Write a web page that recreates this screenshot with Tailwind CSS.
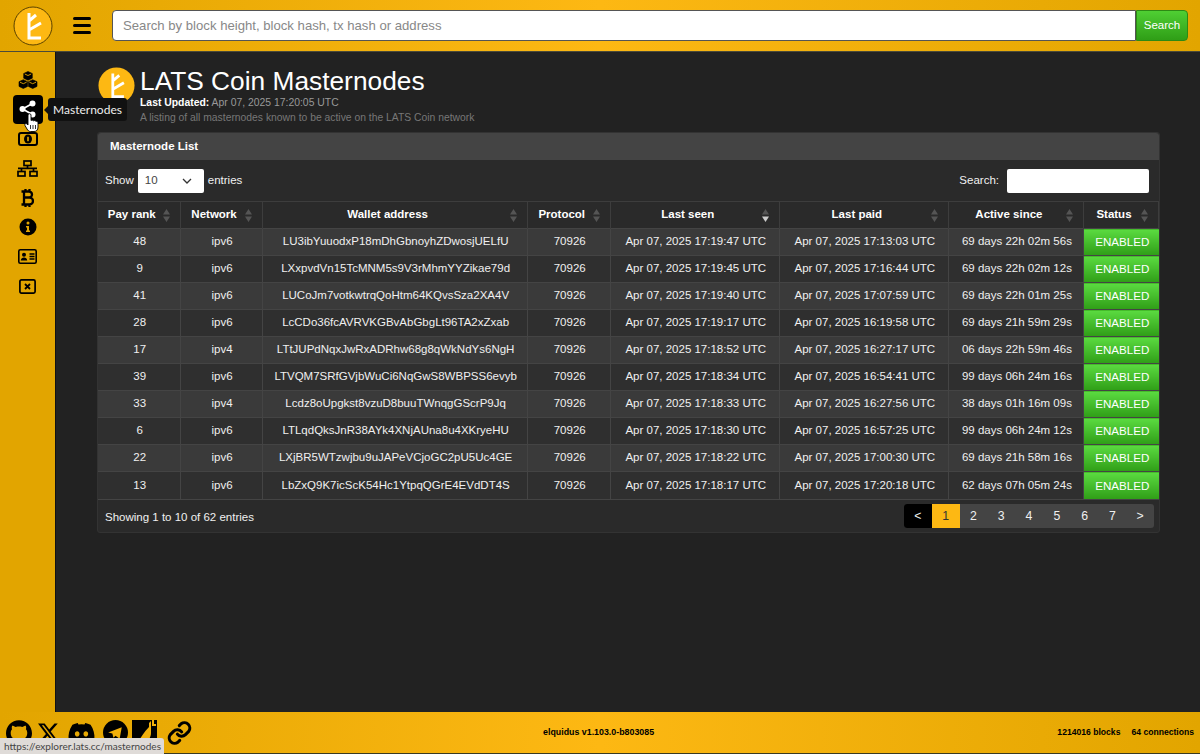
<!DOCTYPE html>
<html><head><meta charset="utf-8"><title>Masternodes</title>
<script src="https://cdn.jsdelivr.net/npm/@tailwindcss/browser@4"></script></head>
<body class="h-[754px] w-[1200px] overflow-hidden bg-[#222222] font-['Liberation_Sans',Arial,sans-serif] text-[11.5px] text-[#f0f0f0]">
<div class="relative flex h-[754px] flex-col">
<header class="flex h-[52px] shrink-0 items-center border-b border-[#4a4a3a] bg-gradient-to-r from-[#e2a500] via-[#fdb813] to-[#e2a500] pl-[13px] pr-[12px]">
  <svg width="40" height="40" viewBox="0 0 40 40" class="shrink-0"><circle cx="20" cy="20" r="19" fill="#fdb813" stroke="#5a4200" stroke-width="1"/><path d="M16 7V32H28M16 15L23 9M16 24L28 17" fill="none" stroke="#fff" stroke-width="3"/></svg>
  <div class="ml-[20px] flex w-[18px] shrink-0 flex-col gap-[4px]"><span class="h-[3px] rounded bg-black"></span><span class="h-[3px] rounded bg-black"></span><span class="h-[3px] rounded bg-black"></span></div>
  <div class="ml-[21px] flex h-[31px] flex-1">
    <div class="flex flex-1 items-center rounded-l border border-[#555] bg-white px-[10px] text-[13.15px] text-[#888]">Search by block height, block hash, tx hash or address</div>
    <div class="flex w-[52px] items-center justify-center rounded-r border border-[#2d8a14] bg-gradient-to-b from-[#4fcf33] to-[#2f9e16] text-[11.5px] text-white">Search</div>
  </div>
</header>
<div class="flex min-h-0 flex-1">
  <aside class="flex w-[56px] shrink-0 flex-col items-center border-r border-[#111] bg-[#e2a500] pt-[13px] text-black">
    <div class="flex h-[29.5px] w-[30px] items-center justify-center"><svg width="20" height="18" viewBox="0 0 20 18"><g fill="#000" stroke="#000" stroke-width=".6"><path d="M10 .5l4.300 2v4.700L10 9.300 5.700 7.200V2.500zM5.300 8.700l4.300 2v4.700l-4.300 2.100L1 15.400v-4.700zM14.700 8.700l4.300 2v4.700l-4.300 2.100-4.300-2.100v-4.700z"/></g><path d="M6.800 3l3.200 1.500L13.200 3M2 11.200l3.300 1.500 3.300-1.500M11.400 11.200l3.300 1.500 3.300-1.500" fill="none" stroke="#e2a500" stroke-width=".9"/></svg></div>
    <div class="flex h-[29.5px] w-[30px] items-center justify-center rounded bg-black"><svg width="17" height="18" viewBox="0 0 17 18" fill="#fff"><circle cx="13.500" cy="3.500" r="3"/><circle cx="3.500" cy="9" r="3"/><circle cx="13.500" cy="14.500" r="3"/><path d="M3.500 9L13.500 3.500M3.500 9l10 5.500" stroke="#fff" stroke-width="1.800"/></svg></div>
    <div class="flex h-[29.500px] w-[30px] items-center justify-center"><svg width="20" height="14" viewBox="0 0 20 14"><rect x="1" y="1" width="18" height="12" rx="2" fill="none" stroke="#000" stroke-width="2"/><ellipse cx="10" cy="7" rx="4" ry="4.500" fill="#000"/><rect x="9.200" y="4.800" width="1.600" height="4.400" fill="#e2a500"/></svg></div>
    <div class="flex h-[29.500px] w-[30px] items-center justify-center"><svg width="21" height="17" viewBox="0 0 21 17" fill="none" stroke="#000" stroke-width="1.700"><rect x="7" y="1" width="7" height="4.500"/><rect x="1" y="11.500" width="7" height="4.500"/><rect x="13" y="11.500" width="7" height="4.500"/><path d="M10.500 5.500v3.300M1 8.300h19M4.500 8.300v3M16.500 8.300v3"/></svg></div>
    <div class="flex h-[29.500px] w-[30px] items-center justify-center"><svg width="13" height="18" viewBox="0 0 13 18" fill="none" stroke="#000" stroke-width="2.300"><path d="M3 2.500v13M.5 2.500H8a3 3 0 010 6H3h5.500a3.500 3.500 0 010 7H.5M4.500 0v2.500M8.500 0v2.500M4.500 15.500V18M8.500 15.500V18"/></svg></div>
    <div class="flex h-[29.500px] w-[30px] items-center justify-center"><svg width="18" height="18" viewBox="0 0 18 18"><circle cx="9" cy="9" r="8.500" fill="#000"/><circle cx="9" cy="5" r="1.500" fill="#e2a500"/><path d="M7 8h3v4.500h1V14H7v-1.500h1V9.500H7z" fill="#e2a500"/></svg></div>
    <div class="flex h-[29.500px] w-[30px] items-center justify-center"><svg width="19" height="15" viewBox="0 0 19 15"><rect x=".8" y=".8" width="17.400" height="13.400" rx="1.500" fill="none" stroke="#000" stroke-width="1.600"/><circle cx="6" cy="5.700" r="2" fill="#000"/><path d="M2.800 11.500c0-4 6.400-4 6.400 0z" fill="#000"/><path d="M11.500 5h5M11.500 7.500h5M11.500 10h5" stroke="#000" stroke-width="1.400"/></svg></div>
    <div class="flex h-[29.500px] w-[30px] items-center justify-center"><svg width="17" height="15" viewBox="0 0 17 15" fill="none" stroke="#000"><rect x=".9" y=".9" width="15.200" height="13.200" rx="1.500" stroke-width="1.700"/><path d="M6 5l5 5M11 5l-5 5" stroke-width="1.800"/></svg></div>
  </aside>
  <main class="flex-1 pl-[41px] pr-[40px] pt-[14px]">
    <div class="flex h-[66px] items-start">
      <svg width="37" height="37" viewBox="0 0 40 40" class="ml-[1px] mt-[1px] shrink-0"><circle cx="20" cy="20" r="19.500" fill="#fdb813"/><path d="M16 7V32H28M16 15L23 9M16 24L28 17" fill="none" stroke="#fff" stroke-width="3"/></svg>
      <div class="ml-[5px]">
        <h1 class="text-[26.3px] leading-[30px] text-white">LATS Coin Masternodes</h1>
        <div class="text-[10.4px] leading-[13px] text-[#999]"><b class="text-white">Last Updated:</b> Apr 07, 2025 17:20:05 UTC</div>
        <div class="mt-[2px] text-[10.35px] leading-[13px] text-[#777]">A listing of all masternodes known to be active on the LATS Coin network</div>
      </div>
    </div>
    <section class="rounded-[3px] border border-[#333] bg-[#2a2a2a]">
      <div class="flex h-[27px] items-center rounded-t-[3px] bg-[#444] pl-[12px] text-[11.5px] font-bold text-white">Masternode List</div>
      <div class="flex h-[41px] items-center justify-between pl-[7px] pr-[10px] pt-[1px]">
        <div class="flex items-center gap-[4px]">Show <div class="flex h-[24px] w-[66px] items-center justify-between rounded-[2px] bg-white pl-[7px] pr-[12px] text-[#444]">10<svg width="10" height="6" viewBox="0 0 10 6" fill="none" stroke="#333" stroke-width="1.300"><path d="M1 1l4 4 4-4"/></svg></div> entries</div>
        <div class="flex items-center gap-[8px]">Search: <div class="h-[24px] w-[142px] rounded-[2px] bg-white"></div></div>
      </div>
      <table class="w-full table-fixed border-collapse border-t border-[#3d3d3d] text-center [&_td]:border-r [&_td]:border-[#444] [&_td]:pl-[2px] [&_th]:relative [&_th]:border-r [&_th]:border-[#3d3d3d] [&_th]:pl-[2px] [&_th]:pr-[16px] [&_th_svg]:absolute [&_th_svg]:right-[10px] [&_th_svg]:top-[7px] [&_tbody_tr]:h-[27px] [&_tbody_tr]:border-t [&_tbody_tr]:border-[#444] [&_tbody_tr:nth-child(odd)]:bg-[#3a3a3a] [&_tbody_tr:nth-child(even)]:bg-[#2f2f2f] [&_td:last-child]:border-r-0 [&_td:last-child]:bg-gradient-to-b [&_td:last-child]:from-[#5bdb40] [&_td:last-child]:to-[#2f9e16] [&_td:last-child]:text-[11.6px] [&_td:last-child]:text-white">
        <colgroup><col class="w-[82px]"><col class="w-[82px]"><col class="w-[265px]"><col class="w-[83px]"><col class="w-[169px]"><col class="w-[169px]"><col class="w-[135px]"><col class="w-[75px]"></colgroup>
        <thead><tr class="h-[27px] text-white">
          <th>Pay rank<svg width="7" height="13" viewBox="0 0 7 13" fill="#555"><path d="M3.500 0L7 5.500H0zM3.500 13L0 7.500h7z"/></svg></th>
          <th>Network<svg width="7" height="13" viewBox="0 0 7 13" fill="#555"><path d="M3.500 0L7 5.500H0zM3.500 13L0 7.500h7z"/></svg></th>
          <th>Wallet address<svg width="7" height="13" viewBox="0 0 7 13" fill="#555"><path d="M3.500 0L7 5.500H0zM3.500 13L0 7.500h7z"/></svg></th>
          <th>Protocol<svg width="7" height="13" viewBox="0 0 7 13" fill="#555"><path d="M3.500 0L7 5.500H0zM3.500 13L0 7.500h7z"/></svg></th>
          <th>Last seen<svg width="7" height="13" viewBox="0 0 7 13"><path d="M3.500 0L7 5.500H0z" fill="#555"/><path d="M3.500 13L0 7.500h7z" fill="#ccc"/></svg></th>
          <th>Last paid<svg width="7" height="13" viewBox="0 0 7 13" fill="#555"><path d="M3.500 0L7 5.500H0zM3.500 13L0 7.500h7z"/></svg></th>
          <th>Active since<svg width="7" height="13" viewBox="0 0 7 13" fill="#555"><path d="M3.500 0L7 5.500H0zM3.500 13L0 7.500h7z"/></svg></th>
          <th class="border-r-0">Status<svg width="7" height="13" viewBox="0 0 7 13" fill="#555"><path d="M3.500 0L7 5.500H0zM3.500 13L0 7.500h7z"/></svg></th>
        </tr></thead>
        <tbody>
          <tr><td>48</td><td>ipv6</td><td>LU3ibYuuodxP18mDhGbnoyhZDwosjUELfU</td><td>70926</td><td>Apr 07, 2025 17:19:47 UTC</td><td>Apr 07, 2025 17:13:03 UTC</td><td>69 days 22h 02m 56s</td><td>ENABLED</td></tr>
          <tr><td>9</td><td>ipv6</td><td>LXxpvdVn15TcMNM5s9V3rMhmYYZikae79d</td><td>70926</td><td>Apr 07, 2025 17:19:45 UTC</td><td>Apr 07, 2025 17:16:44 UTC</td><td>69 days 22h 02m 12s</td><td>ENABLED</td></tr>
          <tr><td>41</td><td>ipv6</td><td>LUCoJm7votkwtrqQoHtm64KQvsSza2XA4V</td><td>70926</td><td>Apr 07, 2025 17:19:40 UTC</td><td>Apr 07, 2025 17:07:59 UTC</td><td>69 days 22h 01m 25s</td><td>ENABLED</td></tr>
          <tr><td>28</td><td>ipv6</td><td>LcCDo36fcAVRVKGBvAbGbgLt96TA2xZxab</td><td>70926</td><td>Apr 07, 2025 17:19:17 UTC</td><td>Apr 07, 2025 16:19:58 UTC</td><td>69 days 21h 59m 29s</td><td>ENABLED</td></tr>
          <tr><td>17</td><td>ipv4</td><td>LTtJUPdNqxJwRxADRhw68g8qWkNdYs6NgH</td><td>70926</td><td>Apr 07, 2025 17:18:52 UTC</td><td>Apr 07, 2025 16:27:17 UTC</td><td>06 days 22h 59m 46s</td><td>ENABLED</td></tr>
          <tr><td>39</td><td>ipv6</td><td>LTVQM7SRfGVjbWuCi6NqGwS8WBPSS6evyb</td><td>70926</td><td>Apr 07, 2025 17:18:34 UTC</td><td>Apr 07, 2025 16:54:41 UTC</td><td>99 days 06h 24m 16s</td><td>ENABLED</td></tr>
          <tr><td>33</td><td>ipv4</td><td>Lcdz8oUpgkst8vzuD8buuTWnqgGScrP9Jq</td><td>70926</td><td>Apr 07, 2025 17:18:33 UTC</td><td>Apr 07, 2025 16:27:56 UTC</td><td>38 days 01h 16m 09s</td><td>ENABLED</td></tr>
          <tr><td>6</td><td>ipv6</td><td>LTLqdQksJnR38AYk4XNjAUna8u4XKryeHU</td><td>70926</td><td>Apr 07, 2025 17:18:30 UTC</td><td>Apr 07, 2025 16:57:25 UTC</td><td>99 days 06h 24m 12s</td><td>ENABLED</td></tr>
          <tr><td>22</td><td>ipv6</td><td>LXjBR5WTzwjbu9uJAPeVCjoGC2pU5Uc4GE</td><td>70926</td><td>Apr 07, 2025 17:18:22 UTC</td><td>Apr 07, 2025 17:00:30 UTC</td><td>69 days 21h 58m 16s</td><td>ENABLED</td></tr>
          <tr><td>13</td><td>ipv6</td><td>LbZxQ9K7icScK54Hc1YtpqQGrE4EVdDT4S</td><td>70926</td><td>Apr 07, 2025 17:18:17 UTC</td><td>Apr 07, 2025 17:20:18 UTC</td><td>62 days 07h 05m 24s</td><td>ENABLED</td></tr>
        </tbody>
      </table>
      <div class="flex h-[33px] items-center justify-between border-t border-[#444] pl-[7px] pr-[5px]">
        <span class="pt-[4px]">Showing 1 to 10 of 62 entries</span>
        <div class="flex h-[24px] w-[250px] overflow-hidden rounded-[3px] bg-[#444] text-center text-[12.25px] leading-[24px] [&>span]:flex-1">
          <span class="bg-black">&lt;</span><span class="bg-[#fdb813] text-[#333]">1</span><span>2</span><span>3</span><span>4</span><span>5</span><span>6</span><span>7</span><span>&gt;</span>
        </div>
      </div>
    </section>
  </main>
</div>
<footer class="flex h-[42px] shrink-0 items-center border-b border-[#3a3a20] bg-gradient-to-r from-[#e2a500] via-[#fdb813] to-[#e2a500] pr-[6px] text-[8.6px] text-black">
  <div class="flex w-[543px] items-center pl-[6px]">
    <svg width="26" height="26" viewBox="0 0 24 24"><path fill-rule="evenodd" d="M12 .297c-6.630 0-12 5.373-12 12 0 5.303 3.438 9.800 8.205 11.385.600.113.820-.258.820-.577 0-.285-.010-1.040-.015-2.040-3.338.724-4.042-1.610-4.042-1.610C4.422 18.070 3.633 17.700 3.633 17.700c-1.087-.744.084-.729.084-.729 1.205.084 1.838 1.236 1.838 1.236 1.070 1.835 2.809 1.305 3.495.998.108-.776.417-1.305.760-1.605-2.665-.300-5.466-1.332-5.466-5.930 0-1.310.465-2.380 1.235-3.220-.135-.303-.540-1.523.105-3.176 0 0 1.005-.322 3.300 1.230.960-.267 1.980-.399 3-.405 1.020.006 2.040.138 3 .405 2.280-1.552 3.285-1.230 3.285-1.230.645 1.653.240 2.873.120 3.176.765.840 1.230 1.910 1.230 3.220 0 4.610-2.805 5.625-5.475 5.920.420.360.810 1.096.810 2.220 0 1.606-.015 2.896-.015 3.286 0 .315.210.690.825.570C20.565 22.092 24 17.592 24 12.297c0-6.627-5.373-12-12-12"/></svg>
    <svg width="21" height="24" viewBox="0 0 24 24" class="ml-[6px]"><path d="M18.901 1.153h3.680l-8.040 9.190L24 22.846h-7.406l-5.800-7.584-6.638 7.584H.474l8.600-9.830L0 1.154h7.594l5.243 6.932ZM17.610 20.644h2.039L6.486 3.240H4.298Z"/></svg>
    <svg width="27" height="26" viewBox="0 0 24 24" class="ml-[9px]"><path d="M20.317 4.370a19.790 19.790 0 0 0-4.885-1.515.074.074 0 0 0-.079.037c-.210.375-.444.864-.608 1.250a18.270 18.270 0 0 0-5.487 0 12.640 12.640 0 0 0-.617-1.250.077.077 0 0 0-.079-.037A19.736 19.736 0 0 0 3.677 4.370a.070.070 0 0 0-.032.027C.533 9.046-.320 13.580.099 18.057a.082.082 0 0 0 .031.057 19.900 19.900 0 0 0 5.993 3.030.078.078 0 0 0 .084-.028c.462-.630.874-1.295 1.226-1.994a.076.076 0 0 0-.041-.106 13.107 13.107 0 0 1-1.872-.892.077.077 0 0 1-.008-.128c.126-.094.252-.192.372-.292a.074.074 0 0 1 .077-.010c3.928 1.793 8.180 1.793 12.062 0a.074.074 0 0 1 .078.010c.120.098.246.198.373.292a.077.077 0 0 1-.006.127 12.299 12.299 0 0 1-1.873.892.077.077 0 0 0-.041.107c.360.698.772 1.362 1.225 1.993a.076.076 0 0 0 .084.028 19.839 19.839 0 0 0 6.002-3.030.077.077 0 0 0 .032-.054c.500-5.177-.838-9.674-3.549-13.660a.061.061 0 0 0-.031-.030zM8.020 15.330c-1.183 0-2.157-1.085-2.157-2.419 0-1.333.956-2.419 2.157-2.419 1.210 0 2.176 1.096 2.157 2.420 0 1.333-.956 2.418-2.157 2.418zm7.975 0c-1.183 0-2.157-1.085-2.157-2.419 0-1.333.955-2.419 2.157-2.419 1.210 0 2.176 1.096 2.157 2.420 0 1.333-.946 2.418-2.157 2.418z"/></svg>
    <svg width="25" height="25" viewBox="0 0 24 24" class="ml-[8px]"><circle cx="12" cy="12" r="12"/><path d="M5 12l13-5-2 11-4-3-2 2-1-4z" fill="#f2b00a"/></svg>
    <svg width="25" height="25" viewBox="0 0 25 25" class="ml-[4px]"><rect width="25" height="25"/><path d="M19 1v12c0 5-3 8-7 8H7c2-4 5-9 10-14V3z" fill="#f2b00a"/><path d="M20 0h2v4h2v2h-4z" fill="#f2b00a"/></svg>
    <svg width="29" height="26" viewBox="0 0 24 24" fill="none" stroke="#000" stroke-width="2.800" stroke-linecap="round" stroke-linejoin="round" class="ml-[8px]"><path d="M10 13a5 5 0 0 0 7.500.500l3-3a5 5 0 0 0-7-7l-1.700 1.700"/><path d="M14 11a5 5 0 0 0-7.500-.500l-3 3a5 5 0 0 0 7 7l1.700-1.700"/></svg>
  </div>
  <div class="flex-1 pt-[1px] text-[8.86px] font-bold">elquidus v1.103.0-b803085</div>
  <div class="flex gap-[11px] font-bold"><span>1214016 blocks</span><span>64 connections</span></div>
</footer>
<div class="absolute left-[48px] top-[98px] flex h-[23px] w-[79px] items-center justify-center rounded-[3px] bg-[#111] font-['Lato',sans-serif] text-[12px] text-[#eee]">Masternodes<span class="absolute left-[-4px] top-[8px] h-0 w-0 border-y-[4px] border-r-[4px] border-y-transparent border-r-[#111]"></span></div>
<svg width="15" height="19" viewBox="0 0 15 19" class="absolute left-[24px] top-[113px]"><path d="M4 2c0-1.700 3-1.700 3 0v5.500c1-.600 2-.400 2.500.300 1-.500 2-.200 2.300.500 1-.300 2.200.300 2.200 1.500V14c0 3-1.500 4.500-4 4.500H6.500c-1.700 0-2.500-1-3.500-2.500L1 12.500c-.800-1.400.900-2.700 2-1.500l1 1z" fill="#fff" stroke="#000" stroke-width=".9"/><path d="M6.500 12v4M9 12v4M11.500 12v4" stroke="#000" stroke-width=".8"/></svg>
<div class="absolute bottom-0 left-0 flex h-[16px] w-[164px] items-center overflow-hidden rounded-tr-[3px] bg-[#dfdbd8] pl-[4px] font-['Lato',sans-serif] text-[10px] text-[#444]">https://explorer.lats.cc/masternodes</div>
</div>
</body></html>
